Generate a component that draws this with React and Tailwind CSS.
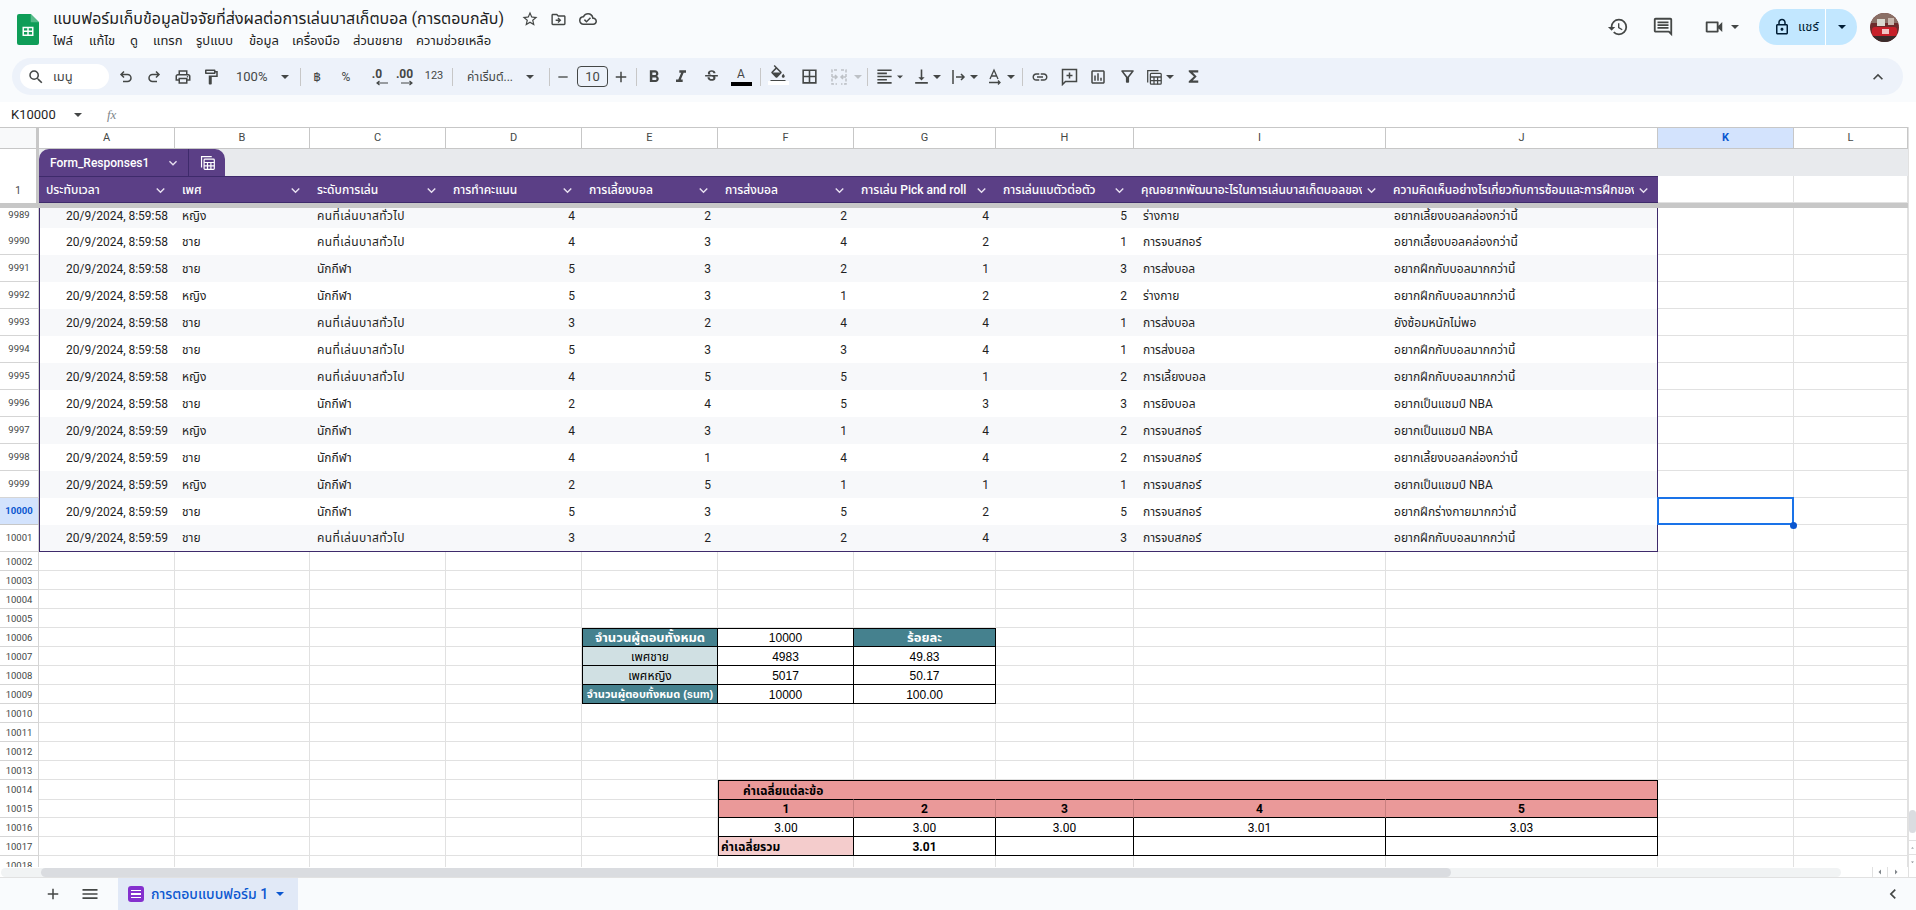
import React from "react";
import {
  MdOutlinePrint, MdOutlineFormatPaint, MdSearch, MdFormatBold, MdFormatItalic, MdStrikethroughS,
  MdOutlineFormatColorFill, MdBorderAll, MdFormatAlignLeft, MdVerticalAlignBottom, MdLink,
  MdOutlineInsertChart, MdOutlineFilterAlt, MdFunctions, MdHistory, MdOutlineComment, MdOutlineVideocam, MdOutlineLock,
  MdStarBorder, MdOutlineDriveFileMove, MdOutlineCloudDone, MdExpandLess, MdAdd, MdMenu, MdKeyboardArrowDown, MdChevronLeft,
  MdArrowDropUp, MdArrowDropDown, MdArrowLeft, MdArrowRight, MdRemove,
} from "react-icons/md";

const FONT = "[font-family:Roboto,'Noto_Sans_Thai','Noto_Sans',sans-serif]";
const GRID = "grid grid-cols-[39px_136px_135px_136px_136px_136px_136px_142px_138px_252px_272px_136px_114px]";

const Caret = ({ c = "text-[#444746]" }) => (
  <svg width="8" height="4" viewBox="0 0 8 4" className={c}><path d="M0 0h8L4 4z" fill="currentColor" /></svg>
);
const Sep = ({ c }) => <div className={"w-px h-[18px] bg-[#c7c7c7] shrink-0 " + c} />;
const T = ({ c, children }) => <div className={"flex items-center justify-center h-full shrink-0 text-[#444746] " + c}>{children}</div>;

const SheetLogo = () => (
  <svg width="22" height="31" viewBox="0 0 24 34" preserveAspectRatio="none">
    <path d="M15 0H2.2A2.2 2.2 0 0 0 0 2.2v29.6A2.2 2.2 0 0 0 2.2 34h19.6a2.2 2.2 0 0 0 2.2-2.2V9z" fill="#0f9d58" />
    <path d="M15 0v9h9z" fill="#57bb8a" />
    <path d="M6 14h12v10H6zm1.6 1.6v2.6h3.6v-2.6zm5.2 0v2.6h3.6v-2.6zm-5.2 4.2v2.6h3.6v-2.6zm5.2 0v2.6h3.6v-2.6z" fill="#fff" fillRule="evenodd" />
  </svg>
);
const UndoIcon = () => (
  <svg width="16" height="16" viewBox="0 0 16 16" fill="none" stroke="#444746" strokeWidth="1.5">
    <path d="M6 2.5L3 5.5l3 3M3 5.5h6.5a3.5 3.5 0 0 1 0 7H5" />
  </svg>
);
const RedoIcon = () => (
  <svg width="16" height="16" viewBox="0 0 16 16" fill="none" stroke="#444746" strokeWidth="1.5">
    <path d="M10 2.5l3 3-3 3M13 5.5H6.5a3.5 3.5 0 0 0 0 7H11" />
  </svg>
);
const AddCommentIcon = () => (
  <svg width="17" height="18" viewBox="0 0 17 18" fill="none" stroke="#444746" strokeWidth="1.5">
    <path d="M1.5 1.5h14v12H4.5l-3 3z" />
    <path d="M8.5 4.5v6M5.5 7.5h6" />
  </svg>
);
const MergeIcon = () => (
  <svg width="18" height="18" viewBox="0 0 18 18" fill="none" stroke="#bdc1c6" strokeWidth="1.5">
    <path d="M7 2H2v14h5M11 2h5v14h-5" strokeDasharray="3 1.5" />
    <path d="M2 9h4M16 9h-4M5 7l2 2-2 2M13 7l-2 2 2 2" />
  </svg>
);
const WrapIcon = () => (
  <svg width="16" height="16" viewBox="0 0 16 16" fill="none" stroke="#444746" strokeWidth="1.5">
    <path d="M3 1v14M6 8h8M11 5l3 3-3 3" />
  </svg>
);
const RotateIcon = () => (
  <svg width="18" height="18" viewBox="0 0 18 18" fill="none" stroke="#444746" strokeWidth="1.3">
    <path d="M4 11l4-9 4 9M5.5 8h5" />
    <path d="M3 14.5h11M12 12.5l2 2-2 2" />
  </svg>
);
const TableIcon = ({ s = 20, col = "#444746" }) => (
  <svg width={s} height={s} viewBox="0 0 20 20" fill="none" stroke={col} strokeWidth="1.4">
    <path d="M3 16V3h12" />
    <rect x="6" y="6" width="12" height="12" rx="1" />
    <path d="M6 10h12M6 14h12M10 10v8M14 10v8" />
  </svg>
);
const Avatar = () => (
  <svg width="29" height="29" viewBox="0 0 29 29" className="rounded-full shrink-0">
    <rect width="29" height="29" fill="#6d2c2c" />
    <rect y="0" width="29" height="10" fill="#8a6f66" />
    <rect x="7" y="6" width="8" height="7" fill="#d9d9d0" />
    <rect x="18" y="5" width="6" height="7" fill="#c9b9b0" />
    <rect x="2" y="14" width="25" height="9" rx="3" fill="#c7202a" />
    <rect x="12" y="16" width="7" height="5" fill="#f2c5c5" />
    <rect y="23" width="29" height="6" fill="#3a2b2b" />
  </svg>
);

const Header = () => (
  <div className="h-[58px] flex shrink-0">
    <div className="ml-[17px] mt-[14px]"><SheetLogo /></div>
    <div className="ml-[14px] flex-1 flex flex-col">
      <div className="h-[30px] mt-[4px] flex items-center">
        <span className="text-[16px] text-[#1f1f1f] w-[462px] whitespace-nowrap">แบบฟอร์มเก็บข้อมูลปัจจัยที่ส่งผลต่อการเล่นบาสเก็ตบอล (การตอบกลับ)</span>
        <MdStarBorder size={18} className="ml-[6px] text-[#444746]" />
        <MdOutlineDriveFileMove size={17} className="ml-[11px] text-[#444746]" />
        <MdOutlineCloudDone size={18} className="ml-[12px] text-[#444746]" />
      </div>
      <div className="flex text-[13px] text-[#1f1f1f] h-[14px] items-center leading-none mt-[-1px] whitespace-nowrap">
        <span className="w-[36px]">ไฟล์</span>
        <span className="w-[41px]">แก้ไข</span>
        <span className="w-[23px]">ดู</span>
        <span className="w-[43px]">แทรก</span>
        <span className="w-[53px]">รูปแบบ</span>
        <span className="w-[43px]">ข้อมูล</span>
        <span className="w-[61px]">เครื่องมือ</span>
        <span className="w-[63px]">ส่วนขยาย</span>
        <span>ความช่วยเหลือ</span>
      </div>
    </div>
    <div className="flex items-center h-[54px] pb-0 text-[#444746]">
      <MdHistory size={22} />
      <MdOutlineComment size={22} className="ml-[23px]" />
      <MdOutlineVideocam size={22} className="ml-[29px]" />
      <div className="ml-[6px]"><Caret /></div>
      <div className="ml-[20px] w-[98px] h-[36px] rounded-full bg-[#c2e7ff] flex items-center text-[#001d35]">
        <MdOutlineLock size={18} className="ml-[14px]" />
        <span className="ml-[7px] text-[13px] w-[27px]">แชร์</span>
        <div className="w-px h-full bg-white" />
        <div className="ml-[12px]"><Caret c="text-[#001d35]" /></div>
      </div>
      <div className="ml-[13px] mr-[17px]"><Avatar /></div>
    </div>
  </div>
);

const Toolbar = () => (
  <div className="h-[37px] ml-[12px] mr-[13px] rounded-full bg-[#edf2fa] flex items-center shrink-0 text-[13px]">
    <div className="ml-[8px] w-[89px] h-[25px] rounded-full bg-white flex items-center text-[#444746]">
      <MdSearch size={18} className="ml-[7px]" />
      <span className="ml-[8px] text-[13px]">เมนู</span>
    </div>
    <T c="ml-[3px] w-[28px]"><UndoIcon /></T>
    <T c="w-[28px]"><RedoIcon /></T>
    <T c="w-[29px]"><MdOutlinePrint size={18} /></T>
    <T c="w-[28px]"><MdOutlineFormatPaint size={18} /></T>
    <T c="w-[67px] pl-[11px] justify-start!"><span className="w-[45px]">100%</span><Caret /></T>
    <Sep c="ml-[8px]" />
    <T c="ml-[2px] w-[28px] text-[13px]">฿</T>
    <T c="ml-[1px] w-[28px] text-[12px]">%</T>
    <T c="ml-[3px] w-[28px]">
      <span className="relative text-[12px] font-bold leading-none pb-[6px]">.0
        <svg width="12" height="6" viewBox="0 0 12 6" className="absolute left-[4px] top-[12px]" fill="none" stroke="#444746" strokeWidth="1.2"><path d="M12 3H1M3.5 1L1 3l2.5 2" /></svg>
      </span>
    </T>
    <T c="w-[27px]">
      <span className="relative text-[12px] font-bold leading-none pb-[6px]">.00
        <svg width="12" height="6" viewBox="0 0 12 6" className="absolute left-[5px] top-[12px]" fill="none" stroke="#444746" strokeWidth="1.2"><path d="M0 3h11M8.5 1L11 3 8.5 5" /></svg>
      </span>
    </T>
    <T c="ml-[2px] w-[28px] text-[11px]">123</T>
    <Sep c="ml-[4px]" />
    <T c="ml-[14px] w-[50px] justify-start! text-[12px] whitespace-nowrap">ค่าเริ่มต์...</T>
    <T c="w-[26px]"><Caret /></T>
    <Sep c="ml-[6px]" />
    <T c="w-[25px]"><MdRemove size={16} /></T>
    <div className="ml-[2px] w-[31px] h-[21px] rounded-[4px] border border-[#444746] flex items-center justify-center text-[#444746] shrink-0 text-[13px]">10</div>
    <T c="ml-[1px] w-[23px]"><MdAdd size={18} /></T>
    <Sep c="ml-[4px]" />
    <T c="ml-[3px] w-[27px]"><MdFormatBold size={20} /></T>
    <T c="w-[28px]"><MdFormatItalic size={20} /></T>
    <T c="ml-[3px] w-[27px]"><MdStrikethroughS size={17} /></T>
    <T c="ml-[2px] w-[28px] flex-col">
      <span className="text-[12px] leading-none mt-[1px] mb-[2px]">A</span>
      <div className="w-[21px] h-[4px] bg-black" />
    </T>
    <Sep c="ml-[5px]" />
    <T c="ml-[3px] w-[28px] flex-col">
      <MdOutlineFormatColorFill size={18} className="mb-[-2px] mt-[-3px]" />
      <div className="w-[21px] h-[4px] bg-white" />
    </T>
    <T c="ml-[3px] w-[28px]"><MdBorderAll size={19} /></T>
    <T c="ml-[2px] w-[28px]"><MergeIcon /></T>
    <T c="w-[10px]"><Caret c="text-[#bdc1c6]" /></T>
    <Sep c="ml-[4px]" />
    <T c="ml-[3px] w-[26px]"><MdFormatAlignLeft size={19} /></T>
    <T c="w-[6px]"><Caret /></T>
    <T c="ml-[6px] w-[24px]"><MdVerticalAlignBottom size={19} /></T>
    <T c="w-[8px]"><Caret /></T>
    <T c="ml-[5px] w-[24px]"><WrapIcon /></T>
    <T c="w-[8px]"><Caret /></T>
    <T c="ml-[5px] w-[24px]"><RotateIcon /></T>
    <T c="w-[8px]"><Caret /></T>
    <Sep c="ml-[7px]" />
    <T c="ml-[4px] w-[26px]"><MdLink size={18} /></T>
    <T c="ml-[3px] w-[26px]"><AddCommentIcon /></T>
    <T c="ml-[3px] w-[26px]"><MdOutlineInsertChart size={18} /></T>
    <T c="ml-[3px] w-[26px]"><MdOutlineFilterAlt size={19} /></T>
    <T c="ml-[2px] w-[24px]"><TableIcon s={18} /></T>
    <T c="w-[8px]"><Caret /></T>
    <T c="ml-[7px] w-[24px]"><MdFunctions size={19} /></T>
    <T c="ml-auto mr-[13px] w-[24px]"><MdExpandLess size={20} /></T>
  </div>
);

const FormulaBar = () => (
  <div className="mt-[7px] h-[25px] bg-white flex items-center shrink-0 text-[13px] text-[#1f1f1f]">
    <span className="ml-[11px] w-[63px]">K10000</span>
    <Caret />
    <span className="ml-[25px] text-[#80868b] italic text-[13px] [font-family:'Liberation_Serif',serif]">fx</span>
  </div>
);

const GL = "border-r border-b border-[#e1e1e1]";
const COLS = ["A", "B", "C", "D", "E", "F", "G", "H", "I", "J", "K", "L"];

const ColHeader = () => (
  <div className={GRID + " h-[22px] bg-white border-t border-[#c7c7c7] shrink-0"}>
    <div className="bg-[#f8f9fa] border-r-[3px] border-b border-[#c7c7c7]" />
    {COLS.map((c) => (
      <div key={c} className={"flex items-center justify-center pt-[1px] text-[11px] border-r border-b border-[#c7c7c7] " + (c === "K" ? "bg-[#d3e3fd] font-bold text-[#0b57d0]" : "text-[#444746]")}>{c}</div>
    ))}
  </div>
);

const HEAD = [
  "ประทับเวลา", "เพศ", "ระดับการเล่น", "การทำคะแนน", "การเลี้ยงบอล", "การส่งบอล",
  "การเล่น Pick and roll", "การเล่นแบตัวต่อตัว", "คุณอยากพัฒนาอะไรในการเล่นบาสเก็ตบอลของคุณ", "ความคิดเห็นอย่างไรเกี่ยวกับการซ้อมและการฝึกของคุณ",
];

const TableBand = () => (
  <div className="flex h-[27px] shrink-0 bg-[#e8eaed]">
    <div className="w-[39px] h-full bg-white border-r-[3px] border-[#c7c7c7]" />
    <div className="w-[186px] h-full bg-[#5b3f86] rounded-t-[10px] flex items-center text-white text-[12px] font-medium">
      <span className="ml-[11px] w-[115px]">Form_Responses1</span>
      <MdKeyboardArrowDown size={16} className="text-[#e8e0f0] mr-[7px]" />
      <div className="w-px h-full bg-[#3e2a6b]" />
      <div className="ml-[10px]"><TableIcon s={17} col="#ffffff" /></div>
    </div>
  </div>
);

const TableHeader = () => (
  <div className={GRID + " h-[27px] shrink-0"}>
    <div className="bg-white border-r-[3px] border-[#c7c7c7] flex items-center justify-center pt-[1px] text-[10px] text-[#444746]">1</div>
    {HEAD.map((h) => (
      <div key={h} className="bg-[#5b3f86] border-t border-b border-[#3e2a6b] flex items-center pt-[1px] text-white text-[12px] font-medium pl-[7px] pr-[2px] min-w-0">
        <span className="flex-1 overflow-hidden whitespace-nowrap">{h}</span>
        <MdKeyboardArrowDown size={17} className="shrink-0 text-[#e8e0f0] ml-[1px] mr-[4px]" />
      </div>
    ))}
    <div className={GL + " bg-white"} />
    <div className={GL + " bg-white"} />
  </div>
);

const A = "คนที่เล่นบาสทั่วไป", P = "นักกีฬา", M = "ชาย", F = "หญิง";
const J1 = "อยากเลี้ยงบอลคล่องกว่านี้", J2 = "อยากฝึกกับบอลมากกว่านี้", J3 = "อยากเป็นแชมป์ NBA";
const DATA = [
  [9989, "58", F, A, 4, 2, 2, 4, 5, "ร่างกาย", J1],
  [9990, "58", M, A, 4, 3, 4, 2, 1, "การจบสกอร์", J1],
  [9991, "58", M, P, 5, 3, 2, 1, 3, "การส่งบอล", J2],
  [9992, "58", F, P, 5, 3, 1, 2, 2, "ร่างกาย", J2],
  [9993, "58", M, A, 3, 2, 4, 4, 1, "การส่งบอล", "ยังซ้อมหนักไม่พอ"],
  [9994, "58", M, A, 5, 3, 3, 4, 1, "การส่งบอล", J2],
  [9995, "58", F, A, 4, 5, 5, 1, 2, "การเลี้ยงบอล", J2],
  [9996, "58", M, P, 2, 4, 5, 3, 3, "การยิงบอล", J3],
  [9997, "59", F, P, 4, 3, 1, 4, 2, "การจบสกอร์", J3],
  [9998, "59", M, P, 4, 1, 4, 4, 2, "การจบสกอร์", J1],
  [9999, "59", F, P, 2, 5, 1, 1, 1, "การจบสกอร์", J3],
  [10000, "59", M, P, 5, 3, 5, 2, 5, "การจบสกอร์", "อยากฝึกร่างกายมากกว่านี้"],
  [10001, "59", M, A, 3, 2, 2, 4, 3, "การจบสกอร์", J2],
];

const RowNum = ({ n, active, c = "items-center" }) => (
  <div className={"flex justify-center text-[9.5px] border-r border-b " + c + " " + (active ? "bg-[#d3e3fd] font-bold text-[#0b57d0] border-[#c7c7c7]" : "bg-white text-[#444746] border-[#d5d5d5]")}>{n}</div>
);

const DataRow = ({ d, i }) => {
  const [n, sec, sex, lvl, a, b, c, e, g, h, j] = d;
  const first = i === 0;
  const last = i === DATA.length - 1;
  const bg = i % 2 === 0 ? "bg-[#f7f8fa]" : "bg-white";
  const bt = last ? " border-b border-[#3e2a6b]" : "";
  const align = first ? " items-end pb-[4px]" : " items-center";
  const base = "flex text-[12px] text-[#1f1f1f] whitespace-nowrap overflow-hidden " + bg + bt + align;
  const num = base + " justify-end pr-[7px]";
  const txt = base + " pl-[7px]";
  return (
    <div className={GRID + " shrink-0 " + (first ? "h-[20px]" : "h-[27px]")}>
      <RowNum n={n} active={n === 10000} c={first ? "items-end pb-[6px]" : "items-center"} />
      <div className={num + " border-l border-[#3e2a6b]"}>{"20/9/2024, 8:59:" + sec}</div>
      <div className={txt}>{sex}</div>
      <div className={txt + (lvl === A ? " tracking-[0.4px]" : "")}>{lvl}</div>
      <div className={num}>{a}</div>
      <div className={num}>{b}</div>
      <div className={num}>{c}</div>
      <div className={num}>{e}</div>
      <div className={num}>{g}</div>
      <div className={base + " pl-[9px]"}>{h}</div>
      <div className={txt + " pl-[8px] border-r border-[#3e2a6b]"}>{j}</div>
      <div className={GL + " bg-white relative"}>
        {n === 10000 && (
          <>
            <div className="absolute inset-[-1px] border-2 border-[#1a73e8] pointer-events-none" />
            <div className="absolute right-[-4px] bottom-[-5px] w-[7px] h-[7px] rounded-full bg-[#0b57d0] z-10" />
          </>
        )}
      </div>
      <div className={GL + " bg-white"} />
    </div>
  );
};

const AR = "[font-family:'Liberation_Sans',Roboto,'Noto_Sans_Thai',sans-serif] ";
const Plain = ({ n, cells = {} }) => (
  <div className={GRID + " h-[19px] shrink-0"}>
    <RowNum n={n} c="items-center pt-[2px]" />
    {COLS.map((c, i) => cells[i] ? <div key={c} className={cells[i].c}>{cells[i].t}</div> : <div key={c} className={GL} />)}
  </div>
);

const BOX = "flex items-center justify-center pt-[1px] whitespace-nowrap overflow-hidden border-r border-b border-black ";
const t1 = AR + BOX + "text-[12px] text-black bg-white";
const t1tl = AR + BOX + "text-[13px] font-bold text-white bg-[#45818e]";
const t1lab = AR + BOX + "text-[12px] text-black bg-[#d0e0e3] border-l";
const t2 = BOX + "text-[12px] text-black bg-white";
const t2b = BOX + "border-t text-[12px] font-bold text-black bg-[#ea9999] border-r-[#c98080]";

const Rows = () => (
  <>
    <Plain n={10002} />
    <Plain n={10003} />
    <Plain n={10004} />
    <Plain n={10005} />
    <Plain n={10006} cells={{
      4: { c: t1tl + " border-l border-t", t: "จำนวนผู้ตอบทั้งหมด" },
      5: { c: t1 + " border-t", t: "10000" },
      6: { c: t1tl + " border-t", t: "ร้อยละ" },
    }} />
    <Plain n={10007} cells={{ 4: { c: t1lab, t: "เพศชาย" }, 5: { c: t1, t: "4983" }, 6: { c: t1, t: "49.83" } }} />
    <Plain n={10008} cells={{ 4: { c: t1lab, t: "เพศหญิง" }, 5: { c: t1, t: "5017" }, 6: { c: t1, t: "50.17" } }} />
    <Plain n={10009} cells={{
      4: { c: AR + BOX + "text-[11px] font-bold text-white bg-[#45818e] border-l", t: "จำนวนผู้ตอบทั้งหมด (sum)" },
      5: { c: t1, t: "10000" },
      6: { c: t1, t: "100.00" },
    }} />
    <Plain n={10010} />
    <Plain n={10011} />
    <Plain n={10012} />
    <Plain n={10013} />
    <div className={GRID + " h-[19px] shrink-0"}>
      <RowNum n={10014} c="items-center pt-[2px]" />
      <div className={GL} /><div className={GL} /><div className={GL} /><div className={GL} />
      <div className={GL} />
      <div className="col-span-5 bg-[#ea9999] border-t border-x border-black flex items-center pt-[1px] pl-[24px] text-[12px] font-bold text-black">ค่าเฉลี่ยแต่ละข้อ</div>
      <div className={GL} /><div className={GL} />
    </div>
    <Plain n={10015} cells={{
      5: { c: t2b + " border-l border-l-black", t: "1" }, 6: { c: t2b, t: "2" }, 7: { c: t2b, t: "3" }, 8: { c: t2b, t: "4" }, 9: { c: t2b + " border-r-black", t: "5" },
    }} />
    <Plain n={10016} cells={{
      5: { c: t2 + " border-l", t: "3.00" }, 6: { c: t2, t: "3.00" }, 7: { c: t2, t: "3.00" }, 8: { c: t2, t: "3.01" }, 9: { c: t2, t: "3.03" },
    }} />
    <Plain n={10017} cells={{
      5: { c: BOX + "justify-start! pl-[2px] text-[12px] font-bold text-black bg-[#f4cccc] border-l", t: "ค่าเฉลี่ยรวม" },
      6: { c: t2 + " font-bold", t: "3.01" }, 7: { c: t2, t: "" }, 8: { c: t2, t: "" }, 9: { c: t2, t: "" },
    }} />
    <Plain n={10018} />
  </>
);

const VScroll = () => (
  <div className="w-[8px] shrink-0 bg-white border-l border-[#e1e1e1] flex flex-col items-center text-[#80868b]">
    <div className="h-[683px] shrink-0" />
    <div className="w-[7px] h-[23px] rounded-full bg-[#dadce0] shrink-0" />
    <div className="h-[7px] shrink-0" />
    <div className="h-[14px] w-full border-t border-[#e1e1e1] flex items-center justify-center"><MdArrowDropUp size={12} /></div>
    <div className="h-[14px] w-full border-t border-[#e1e1e1] flex items-center justify-center"><MdArrowDropDown size={12} /></div>
  </div>
);

const Bottom = () => (
  <div className="h-[32px] flex-1 bg-[#f9fbfd] border-t border-[#e1e1e1] flex items-center text-[#444746]">
    <MdAdd size={18} className="ml-[44px]" />
    <MdMenu size={20} className="ml-[18px]" />
    <div className="ml-[18px] w-[180px] h-full bg-[#e1e9f7] flex items-center">
      <div className="ml-[10px] w-[16px] h-[16px] rounded-[3px] bg-[#8430ce] flex flex-col items-center justify-center gap-[2px]">
        <div className="w-[10px] h-[1.5px] bg-white" />
        <div className="w-[10px] h-[1.5px] bg-white" />
        <div className="w-[10px] h-[1.5px] bg-white" />
      </div>
      <span className="ml-[7px] w-[125px] text-[14px] font-medium text-[#0b57d0] whitespace-nowrap">การตอบแบบฟอร์ม 1</span>
      <Caret c="text-[#0b57d0]" />
    </div>
    <MdChevronLeft size={20} className="ml-auto mr-[13px]" />
  </div>
);

export default function App() {
  return (
    <div className={"w-[1916px] h-[910px] overflow-hidden bg-[#f9fbfd] flex flex-col " + FONT}>
      <Header />
      <Toolbar />
      <FormulaBar />
      <div className="flex h-[750px] shrink-0">
        <div className="flex-1 min-w-0 flex flex-col bg-white">
          <ColHeader />
          <TableBand />
          <TableHeader />
          <div className="h-[5px] bg-[#c7c7c7] shrink-0" />
          <div className="h-[659px] overflow-hidden flex flex-col shrink-0">
            {DATA.map((d, i) => <DataRow key={d[0]} d={d} i={i} />)}
            <Rows />
          </div>
          <div className="h-[10px] bg-white flex items-center shrink-0">
            <div className="w-[1840px] h-[9px] ml-[1px] bg-[#f1f3f4] rounded-full flex-none flex">
              <div className="ml-[40px] w-[1410px] h-full rounded-full bg-[#dadce0]" />
            </div>
            <div className="ml-auto w-[15px] h-full border-l border-[#e1e1e1] flex items-center justify-center text-[#80868b]"><MdArrowLeft size={12} /></div>
            <div className="w-[21px] h-full border-l border-[#e1e1e1] flex items-center justify-start pl-[2px] text-[#80868b]"><MdArrowRight size={12} /></div>
          </div>
        </div>
        <VScroll />
      </div>
      <Bottom />
    </div>
  );
}
